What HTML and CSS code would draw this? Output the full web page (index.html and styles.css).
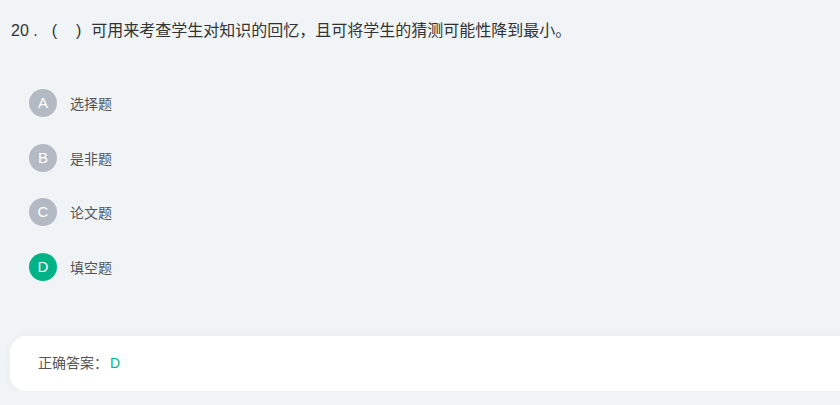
FILE: index.html
```html
<!DOCTYPE html>
<html lang="zh">
<head>
    <meta charset="UTF-8">
    <meta name="viewport" content="width=device-width, initial-scale=1.0">
    <title>题目</title>
    <link rel="stylesheet" href="styles.css">
</head>
<body>
    <div class="question">
        <div class="q-title"><span class="q-no">20 .</span><span class="q-blank">(<span class="gap"></span>)</span>可用来考查学生对知识的回忆，且可将学生的猜测可能性降到最小。</div>

        <ul class="options">
            <li><span class="letter">A</span><span class="opt-text">选择题</span></li>
            <li><span class="letter">B</span><span class="opt-text">是非题</span></li>
            <li><span class="letter">C</span><span class="opt-text">论文题</span></li>
            <li class="right"><span class="letter">D</span><span class="opt-text">填空题</span></li>
        </ul>

        <div class="answer">
            正确答案：<span class="answer-key">D</span>
        </div>
    </div>
</body>
</html>
```

FILE: styles.css
```css
body {
    margin: 0;
    background: #f0f4f7;
    font-family: "Liberation Sans", "Noto Sans CJK SC", sans-serif;
    color: #333;
    overflow: hidden;
}
.question {
    padding: 20px 0 0 11px;
}
.q-title {
    font-size: 16px;
    line-height: 22px;
    color: #333;
}
.q-no {
    margin-right: 14px;
}
.q-blank {
    margin-right: 10px;
}
.gap {
    display: inline-block;
    width: 19px;
}
.options {
    list-style: none;
    margin: 0;
    padding: 47px 0 0 18px;
}
.options li {
    display: flex;
    align-items: center;
    height: 28px;
    margin-bottom: 26.5px;
}
.letter {
    width: 28px;
    height: 28px;
    border-radius: 50%;
    background: #b4bac4;
    color: #fff;
    font-size: 15px;
    line-height: 28px;
    text-align: center;
}
.right .letter {
    background: #00b386;
}
.opt-text {
    margin-left: 13px;
    font-size: 14px;
    color: #555;
}
.answer {
    margin: 55px -40px 0 -1px;
    height: 55px;
    line-height: 55px;
    padding-left: 28px;
    background: #fff;
    border-radius: 16px;
    box-shadow: 0 0 8px rgba(0,0,0,.04);
    font-size: 14px;
    color: #555;
}
.answer-key {
    margin-left: 2px;
    color: #00b386;
}
```
